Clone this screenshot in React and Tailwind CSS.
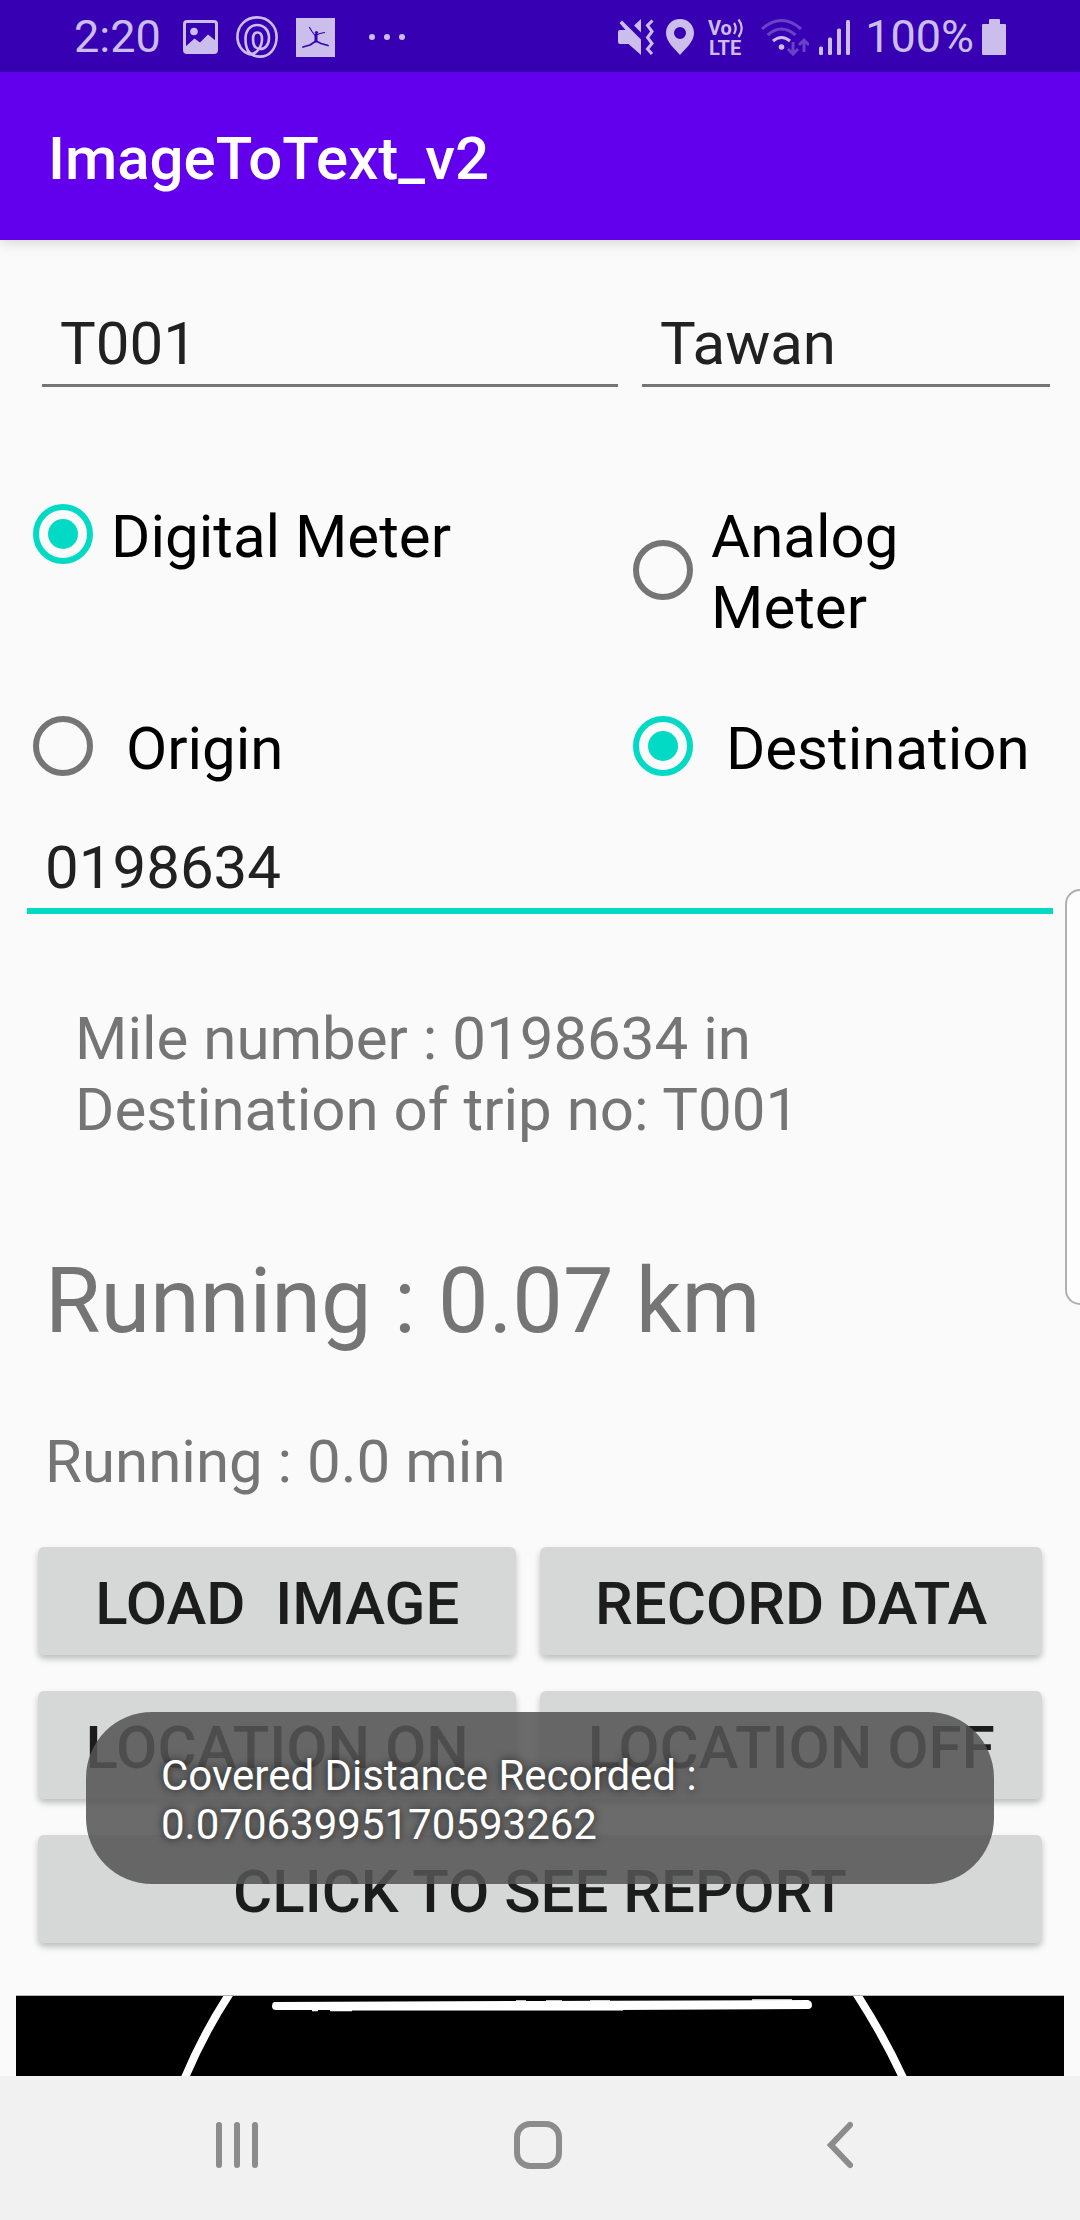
import React, { useState } from "react";

function PhotoIcon() {
  return (
    <svg width="35" height="34" viewBox="0 0 35 34" fill="none" aria-hidden="true">
      <rect x="1.5" y="1.5" width="32" height="31" rx="2.5" stroke="currentColor" strokeWidth="3" />
      <circle cx="11" cy="11.5" r="3.8" fill="currentColor" />
      <path d="M2 27 L11.5 18.5 L17 22.5 L25 14.5 L33 21 V32 H2 Z" fill="currentColor" />
    </svg>
  );
}

function SwirlIcon() {
  return (
    <svg width="42" height="42" viewBox="0 0 42 42" fill="none" stroke="currentColor" strokeWidth="2.6" aria-hidden="true">
      <path d="M14 38.5 C6 36 1.4 29 1.4 21 C1.4 9.5 10 1.4 21 1.4 C32.5 1.4 40.6 10 40.6 21 C40.6 33 33 40.6 24 40.6 C14 40.6 9.500 34 9.500 23 C9.500 14 14.500 9 21 9 C28 9 33 14 33 22 C33 29 29 33 24.500 33 C19.500 33 17 29 17 23 C17 18.500 18.500 16.500 21.500 16.500 C24.500 16.500 26 19 26 23 C26 31 20 38.500 14 38.500" />
    </svg>
  );
}

function DancerIcon() {
  return (
    <svg width="39" height="39" viewBox="0 0 39 39" fill="none" aria-hidden="true">
      <rect width="39" height="39" fill="currentColor" />
      <g stroke="#3700b3" strokeLinecap="round" strokeLinejoin="round">
        <path d="M13.5 9.5 L16 13.5 L19.5 18" strokeWidth="1.2" />
        <path d="M20 17 L24 15.5 L28.5 14.5" strokeWidth="1.2" />
        <path d="M20 17 L20 23" strokeWidth="3" />
        <path d="M20 23 L14 27 L7 29" strokeWidth="1.8" />
        <path d="M20 23 L25 25.5 L32 27.5" strokeWidth="1.8" />
      </g>
      <circle cx="20.5" cy="14.5" r="1.6" fill="#3700b3" />
    </svg>
  );
}

function MoreIcon() {
  return (
    <svg width="36" height="6" viewBox="0 0 36 6" fill="currentColor" aria-hidden="true">
      <circle cx="3" cy="3" r="3" />
      <circle cx="18" cy="3" r="3" />
      <circle cx="33" cy="3" r="3" />
    </svg>
  );
}

function MuteIcon() {
  return (
    <svg width="36" height="36" viewBox="0 0 36 36" fill="none" aria-hidden="true">
      <path d="M2 11 H7.5 L1.5 4 L4 1.5 L23 20.5 V36 L10.5 25 H2 Q0 25 0 23 V13 Q0 11 2 11 Z" fill="currentColor" />
      <path d="M23 0 V13.5 L16 6.5 Z" fill="currentColor" />
      <path d="M34.5 1.5 L29.5 6.5 L34 12.5 L29.5 18.5 L34 24.5 L29.5 30 L34 35" stroke="currentColor" strokeWidth="3" />
    </svg>
  );
}

function PinIcon() {
  return (
    <svg width="28" height="36" viewBox="0 0 28 36" fill="currentColor" aria-hidden="true">
      <path fillRule="evenodd" d="M14 0 C22 0 28 6 28 14 C28 23 19 30 14 36 C9 30 0 23 0 14 C0 6 6 0 14 0 Z M14 8 A6 6 0 1 0 14 20 A6 6 0 1 0 14 8 Z" />
    </svg>
  );
}

function VolteIcon() {
  return (
    <svg className="overflow-visible" width="37" height="46" viewBox="0 -4 37 46" aria-label="VoLTE">
      <g fill="currentColor" fontFamily="Roboto, sans-serif" fontWeight="700">
        <text x="0" y="16.5" fontSize="20">Vo</text>
        <text x="1" y="37" fontSize="20">LTE</text>
      </g>
      <g fill="none" stroke="currentColor" strokeWidth="2.2">
        <path d="M26 5 Q29.5 10 26 16" />
        <path d="M30.5 1.5 Q37 10 30.5 19" />
      </g>
    </svg>
  );
}

function WifiIcon() {
  return (
    <svg width="48" height="37" viewBox="0 0 48 37" fill="none" stroke="currentColor" strokeWidth="3" aria-hidden="true">
      <path d="M1 10 Q20.5 -7 40 10" opacity="0.35" />
      <path d="M6.5 16 Q20.5 4 34.5 16" opacity="0.35" />
      <path d="M12 22 Q20.5 15 29 22" />
      <circle cx="20.5" cy="28" r="2.8" fill="currentColor" stroke="none" />
      <path d="M32 23 V35 M27 30 L32 35 L37 30" opacity="0.35" />
      <path d="M43 33 V21 M38 26 L43 21 L48 26" opacity="0.35" />
    </svg>
  );
}

function SignalIcon() {
  return (
    <svg width="32" height="35" viewBox="0 0 32 35" fill="currentColor" aria-hidden="true">
      <rect x="0" y="26.5" width="4" height="8.5" rx="1.5" />
      <rect x="9" y="17.5" width="4" height="17.5" rx="1.5" />
      <rect x="18" y="8.5" width="4" height="26.5" rx="1.5" />
      <rect x="27" y="0" width="4" height="35" rx="1.5" />
    </svg>
  );
}

function BatteryIcon() {
  return (
    <svg width="24" height="36" viewBox="0 0 24 36" fill="currentColor" aria-hidden="true">
      <path d="M7 1 Q7 0 8 0 H17 Q18 0 18 1 V5 H23 Q24 5 24 6 V35 Q24 36 23 36 H1 Q0 36 0 35 V6 Q0 5 1 5 H7 Z" />
    </svg>
  );
}

function StatusBar() {
  return (
    <div className="flex h-[72px] items-center justify-between bg-[#3700b3] px-[74px] pt-0.5 text-[#cbbdec]">
      <div className="flex items-center">
        <span className="text-[45px] leading-[54px]">2:20</span>
        <div className="ml-[22px] flex items-center gap-[18px]">
          <PhotoIcon />
          <SwirlIcon />
          <DancerIcon />
        </div>
        <div className="ml-[34px]">
          <MoreIcon />
        </div>
      </div>
      <div className="flex items-center">
        <div className="flex items-center gap-3">
          <MuteIcon />
          <PinIcon />
          <div className="flex items-center gap-4 pl-0.5">
            <VolteIcon />
            <WifiIcon />
          </div>
        </div>
        <div className="ml-[10px] flex items-center gap-[14px]">
          <SignalIcon />
          <span className="text-[45px] leading-[54px]">100%</span>
        </div>
        <div className="ml-2">
          <BatteryIcon />
        </div>
      </div>
    </div>
  );
}

function Field({ label, value, onChange, focused }) {
  return (
    <input
      type="text"
      aria-label={label}
      value={value}
      onChange={(e) => onChange(e.target.value)}
      className={
        focused
          ? "w-full min-w-0 border-b-[6px] border-[#03dac5] bg-transparent px-[18px] pb-[5px] leading-[71px] text-[#212121] outline-none"
          : "w-full min-w-0 border-b-[3px] border-[#757575] bg-transparent px-[18px] pb-[5px] leading-[71px] text-[#212121] outline-none"
      }
    />
  );
}

function Radio({ name, label, checked, onSelect }) {
  return (
    <label className="relative flex items-center gap-[18px] self-start">
      <input
        type="radio"
        name={name}
        checked={checked}
        onChange={onSelect}
        className="sr-only"
      />
      <span
        className={
          checked
            ? "flex size-[60px] shrink-0 items-center justify-center rounded-full border-[6px] border-[#03dac5]"
            : "flex size-[60px] shrink-0 items-center justify-center rounded-full border-[6px] border-[#757575]"
        }
      >
        {checked && <span className="size-[30px] rounded-full bg-[#03dac5]" />}
      </span>
      <span className="pt-[5px] whitespace-pre-wrap text-black">{label}</span>
    </label>
  );
}

function ActionButton({ children, wide }) {
  return (
    <button
      type="button"
      className={
        wide
          ? "col-span-2 h-[108px] rounded-md bg-[#d6d8d7] pt-[5px] font-medium whitespace-pre text-[#1c1c1c] shadow-[0_4px_6px_rgba(0,0,0,0.24)]"
          : "h-[108px] rounded-md bg-[#d6d8d7] pt-[5px] font-medium whitespace-pre text-[#1c1c1c] shadow-[0_4px_6px_rgba(0,0,0,0.24)]"
      }
    >
      {children}
    </button>
  );
}

function MeterImage() {
  return (
    <svg
      className="mx-4 mt-[52px] block h-[72px] shrink-0 grow border-t border-[#b4b4b4] bg-black"
      viewBox="0 0 1048 80"
      preserveAspectRatio="xMidYMin slice"
      role="img"
      aria-label="Meter"
    >
      <g fill="none" stroke="white" strokeWidth="8">
        <path d="M216 -6 Q188 36 168 84" />
        <path d="M838 -6 Q868 40 888 84" />
      </g>
      <path d="M258 6 L520 5 L792 4 Q796 5 796 9 Q796 13 792 13 L600 14 L340 14 L260 14 Q256 14 256 10 Q256 7 258 6 Z" fill="white" />
      <path d="M500 5 h10 M530 5 h16 M574 5 h20 M736 4 h40 M296 14.500 h6 M314 14.500 h22" stroke="white" strokeWidth="1.500" />
      <path d="M336 14.500 H607" stroke="#888888" strokeWidth="1" />
    </svg>
  );
}

function Toast() {
  return (
    <div
      role="status"
      className="absolute inset-x-[86px] top-[21px] rounded-[66px] bg-[#555555]/87 px-[75px] pt-[39px] pb-[35px] text-[42px] leading-[49px] text-white [text-shadow:0_0_8px_rgba(0,0,0,0.73)]"
    >
      Covered Distance Recorded :
      <br />
      0.07063995170593262
    </div>
  );
}

function NavBar() {
  return (
    <nav className="grid h-[144px] grid-cols-[1fr_130px_1fr] items-center bg-[#f1f1f1] pr-1 pb-1.5 text-[#8c8c8c]">
      <button type="button" aria-label="Recent apps" className="flex justify-center">
        <svg width="42" height="48" viewBox="0 0 42 48" stroke="currentColor" strokeWidth="6" strokeLinecap="round" fill="none">
          <path d="M3 4 V44 M21 4 V44 M39 4 V44" />
        </svg>
      </button>
      <button type="button" aria-label="Home" className="flex justify-center">
        <svg width="48" height="48" viewBox="0 0 48 48" stroke="currentColor" strokeWidth="6" fill="none">
          <rect x="3" y="3" width="42" height="42" rx="13" />
        </svg>
      </button>
      <button type="button" aria-label="Back" className="flex justify-center">
        <svg width="26" height="48" viewBox="0 0 26 48" stroke="currentColor" strokeWidth="6" strokeLinecap="round" fill="none">
          <path d="M23 4 L4 24 L23 44" />
        </svg>
      </button>
    </nav>
  );
}

export default function App() {
  const [trip, setTrip] = useState("T001");
  const [driver, setDriver] = useState("Tawan");
  const [mile, setMile] = useState("0198634");
  const [meter, setMeter] = useState("digital");
  const [place, setPlace] = useState("destination");

  return (
    <div className="relative flex min-h-screen flex-col bg-[#fafafa] font-[Roboto,sans-serif] text-[60px] leading-[71px]">
      <StatusBar />
      <header className="z-10 flex h-[168px] items-center bg-[#6200ee] px-12 shadow-[0_3px_12px_rgba(0,0,0,0.14)]">
        <h1 className="pt-1 font-medium text-white">ImageToText_v2</h1>
      </header>

      <main className="flex flex-1 flex-col pt-[68px]">
        <div className="grid grid-cols-[24fr_17fr] gap-6 pr-[30px] pl-[42px]">
          <Field label="Trip number" value={trip} onChange={setTrip} />
          <Field label="Driver" value={driver} onChange={setDriver} />
        </div>

        <div className="mt-[109px] grid grid-cols-[5fr_4fr] gap-y-[65px]">
          <div className="flex pl-[33px]">
            <Radio name="meter" label="Digital Meter" checked={meter === "digital"} onSelect={() => setMeter("digital")} />
          </div>
          <div className="flex pr-12 pl-[33px]">
            <Radio name="meter" label={"Analog\nMeter"} checked={meter === "analog"} onSelect={() => setMeter("analog")} />
          </div>
          <div className="flex pl-[33px]">
            <Radio name="place" label=" Origin" checked={place === "origin"} onSelect={() => setPlace("origin")} />
          </div>
          <div className="flex pl-[33px]">
            <Radio name="place" label=" Destination" checked={place === "destination"} onSelect={() => setPlace("destination")} />
          </div>
        </div>

        <div className="mt-12 flex px-[27px]">
          <Field label="Mile number" value={mile} onChange={setMile} focused />
        </div>

        <p className="mt-[89px] px-[75px] text-[#757575]">
          Mile number : 0198634 in
          <br />
          Destination of trip no: T001
        </p>
        <p className="mt-[104px] px-[45px] text-[90px] leading-[105px] text-[#757575]">Running : 0.07 km</p>
        <p className="mt-[72px] px-[45px] text-[#757575]">Running : 0.0 min</p>

        <div className="mt-[50px] grid grid-cols-[478fr_501fr] gap-x-6 gap-y-9 px-[38px]">
          <ActionButton>{"LOAD  IMAGE"}</ActionButton>
          <ActionButton>RECORD DATA</ActionButton>
          <div className="relative col-span-2 -mx-[38px] grid grid-cols-[478fr_501fr] gap-x-6 px-[38px]">
            <ActionButton>LOCATION ON</ActionButton>
            <ActionButton>LOCATION OFF</ActionButton>
            <Toast />
          </div>
          <ActionButton wide>CLICK TO SEE REPORT</ActionButton>
        </div>

        <MeterImage />
      </main>

      <NavBar />

      <div className="absolute top-[889px] right-0 h-[416px] w-[15px] rounded-l-[20px] border-2 border-r-0 border-[#b0b0b0] bg-[#fdfdfd]" />
    </div>
  );
}
